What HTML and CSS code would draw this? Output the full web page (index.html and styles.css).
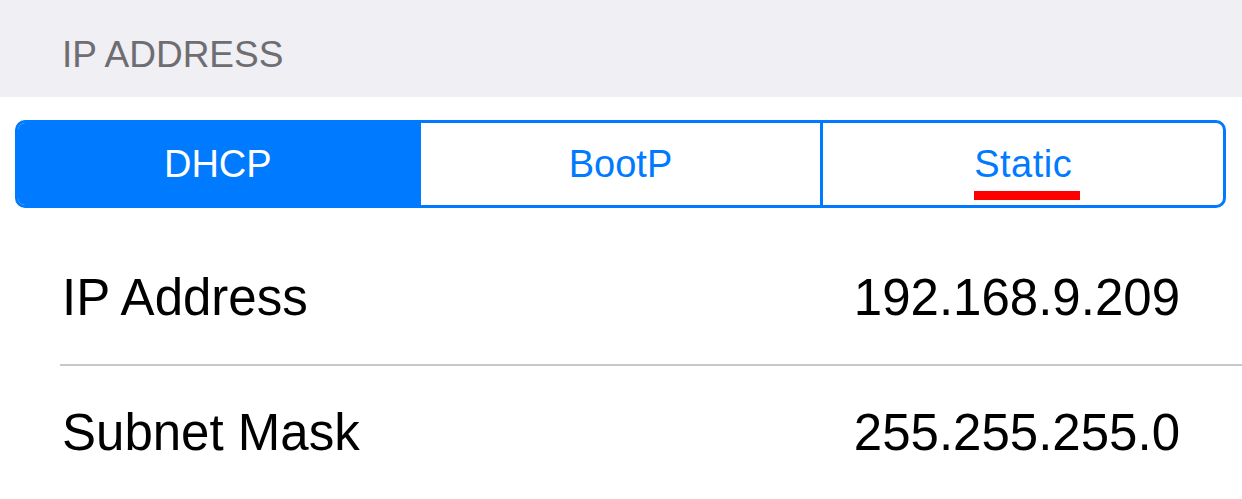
FILE: index.html
```html
<!DOCTYPE html>
<html>
<head>
  <meta charset="UTF-8">
  <title>IP Address</title>
  <link rel="stylesheet" href="styles.css">
</head>
<body>

  <div class="section-header">IP ADDRESS</div>

  <div class="segmented">
    <div class="segment selected">DHCP</div>
    <div class="segment">BootP</div>
    <div class="segment"><span class="marked">Static</span></div>
  </div>

  <div class="list">
    <div class="row">
      <span class="row-label">IP Address</span>
      <span class="row-value">192.168.9.209</span>
    </div>
    <div class="row">
      <span class="row-label">Subnet Mask</span>
      <span class="row-value">255.255.255.0</span>
    </div>
  </div>

</body>
</html>
```

FILE: styles.css
```css
* {
  margin: 0;
  padding: 0;
  box-sizing: border-box;
}

body {
  font-family: "Liberation Sans", Arial, sans-serif;
  background: #ffffff;
  color: #000000;
  width: 1242px;
  height: 499px;
  overflow: hidden;
}

.section-header {
  background: #efeff4;
  height: 97px;
  padding: 35px 0 0 62px;
  font-size: 37px;
  line-height: 40px;
  color: #6d6d72;
}

.segmented {
  display: flex;
  margin: 23px 16px 0 15px;
  height: 88px;
  border: 3px solid #007aff;
  border-radius: 10px;
  overflow: hidden;
}

.segment {
  flex: 1;
  display: flex;
  align-items: center;
  justify-content: center;
  font-size: 38px;
  color: #007aff;
  border-left: 3px solid #007aff;
}

.segment:first-child {
  border-left: none;
}

.segment.selected {
  background: #007aff;
  color: #ffffff;
}

.marked {
  position: relative;
  display: inline-block;
  letter-spacing: 0.5px;
}

.marked::after {
  content: "";
  position: absolute;
  left: 0;
  right: -8px;
  bottom: -14px;
  height: 9px;
  background: #ff0000;
}

.list {
  margin-top: 22px;
}

.row {
  display: flex;
  align-items: center;
  justify-content: space-between;
  height: 134px;
  margin-left: 60px;
  padding: 0 62px 0 2px;
  font-size: 51px;
}

.row + .row {
  border-top: 2px solid #c8c7cc;
}
```
